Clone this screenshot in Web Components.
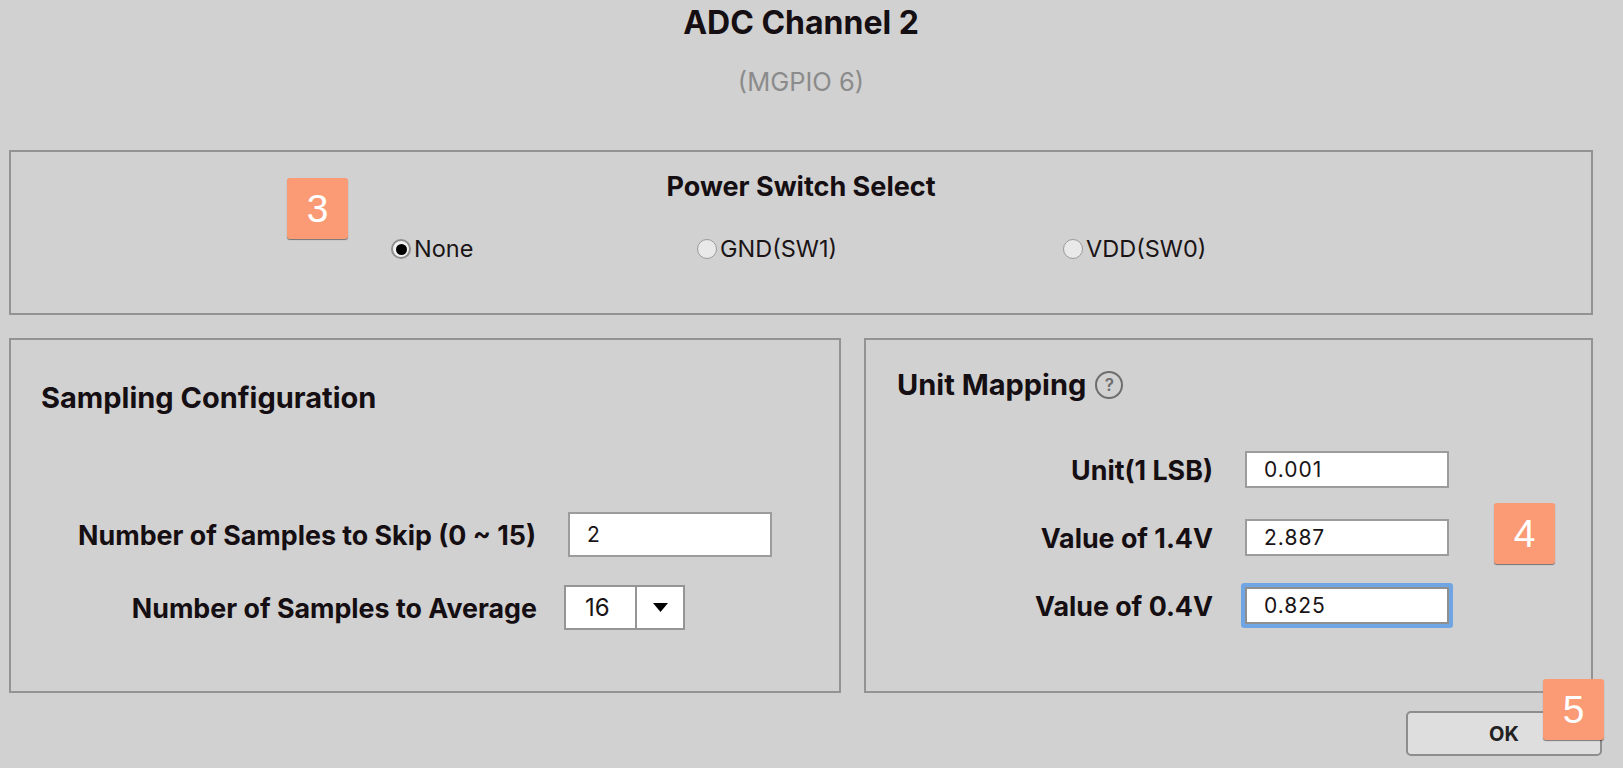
<!DOCTYPE html>
<html>
<head>
<meta charset="utf-8">
<title>ADC Channel 2</title>
<style>
  html, body { margin: 0; background: #d1d1d1; overflow: hidden; }
  body { font-family: Inter, "Liberation Sans", sans-serif; color: #150e12; }
</style>
</head>
<body>
<adc-dialog>
  <dialog-head slot="head" sub="(MGPIO 6)">ADC Channel 2</dialog-head>

  <config-panel slot="top" style="height:165px">
    <panel-title center style="padding-top:19px">Power Switch Select</panel-title>
    <radio-group style="padding:31px 0 0 380px">
      <radio-option checked style="width:306px">None</radio-option>
      <radio-option style="width:366px">GND(SW1)</radio-option>
      <radio-option>VDD(SW0)</radio-option>
    </radio-group>
  </config-panel>

  <config-panel slot="left" style="height:355px">
    <panel-title style="padding:42px 0 0 30px;font-size:29px">Sampling Configuration</panel-title>
    <form-row label-width="525" gap="32" style="margin-top:98px">
      <span slot="label">Number of Samples to Skip (0 ~ 15)</span>
      <text-field style="width:204px;height:45px;line-height:41px">2</text-field>
    </form-row>
    <form-row label-width="526" gap="27" style="margin-top:28px">
      <span slot="label">Number of Samples to Average</span>
      <combo-box>16</combo-box>
    </form-row>
  </config-panel>

  <config-panel slot="right" style="height:355px">
    <panel-title style="display:flex;align-items:center;gap:9px;padding:29px 0 0 31px;font-size:29px"><span>Unit Mapping</span><help-icon></help-icon></panel-title>
    <form-row label-width="347" gap="32" style="margin-top:50px">
      <span slot="label">Unit(1 LSB)</span>
      <text-field style="width:204px">0.001</text-field>
    </form-row>
    <form-row label-width="347" gap="32" style="margin-top:31px">
      <span slot="label">Value of 1.4V</span>
      <text-field style="width:204px">2.887</text-field>
    </form-row>
    <form-row label-width="347" gap="32" style="margin-top:31px">
      <span slot="label">Value of 0.4V</span>
      <text-field focused style="width:204px">0.825</text-field>
    </form-row>
  </config-panel>

  <push-button slot="actions">OK</push-button>

  <note-badge slot="notes" x="287" y="178">3</note-badge>
  <note-badge slot="notes" x="1494" y="503">4</note-badge>
  <note-badge slot="notes" x="1543" y="679">5</note-badge>
</adc-dialog>

<script>
// small helper, every element below is just a template + shadow root
function tpl(html) {
  const t = document.createElement("template");
  t.innerHTML = html;
  return t;
}

class Base extends HTMLElement {
  constructor() {
    super();
    this.root = this.attachShadow({ mode: "open" });
    this.root.appendChild(this.constructor.template.content.cloneNode(true));
  }
}

class AdcDialog extends Base {
  static template = tpl(`
    <style>
      :host { display: block; position: relative; width: 1623px; height: 768px; box-sizing: border-box; padding: 0 30px 0 9px; }
      .columns { display: flex; gap: 23px; margin-top: 23px; }
      .columns ::slotted([slot=left]) { width: 832px; }
      .columns ::slotted([slot=right]) { width: 729px; }
      .actions { display: flex; justify-content: flex-end; margin: 18px -9px 0 0; }
    </style>
    <slot name="head"></slot>
    <div><slot name="top"></slot></div>
    <div class="columns"><slot name="left"></slot><slot name="right"></slot></div>
    <div class="actions"><slot name="actions"></slot></div>
    <slot name="notes"></slot>
  `);
}

class DialogHead extends Base {
  static template = tpl(`
    <style>
      :host { display: block; height: 150px; box-sizing: border-box; padding-top: 5px; text-align: center; }
      h1 { margin: 0; font-size: 32px; line-height: 36px; font-weight: 700; }
      p { margin: 23px 0 0; font-size: 25.5px; line-height: 36px; color: #8b8b8b; }
    </style>
    <h1><slot></slot></h1>
    <p></p>
  `);
  connectedCallback() {
    this.root.querySelector("p").textContent = this.getAttribute("sub");
  }
}

class ConfigPanel extends Base {
  static template = tpl(`
    <style>
      :host { display: block; box-sizing: border-box; border: 2px solid #939393; }
    </style>
    <slot></slot>
  `);
}

class PanelTitle extends Base {
  static template = tpl(`
    <style>
      :host { display: block; font-size: 27px; line-height: 32px; font-weight: 700; }
      :host([center]) { text-align: center; }
    </style>
    <slot></slot>
  `);
}

class RadioGroup extends Base {
  static template = tpl(`
    <style>:host { display: flex; }</style>
    <slot></slot>
  `);
}

class RadioOption extends Base {
  static template = tpl(`
    <style>
      :host { display: flex; align-items: center; gap: 3px; box-sizing: border-box; font-size: 23.5px; line-height: 30px; color: #1a1416; }
      i { width: 20px; height: 20px; box-sizing: border-box; border-radius: 50%; border: 1px solid #9a9a9a; background: #e9e9e9; display: flex; align-items: center; justify-content: center; }
      :host([checked]) i { border: 2px solid #8e8e8e; background: #f2f2f2; }
      :host([checked]) i::after { content: ""; width: 11px; height: 11px; border-radius: 50%; background: #000; }
    </style>
    <i></i><span><slot></slot></span>
  `);
}

class FormRow extends Base {
  static template = tpl(`
    <style>
      :host { display: flex; align-items: center; font-size: 26.8px; font-weight: 700; }
      .label { text-align: right; flex: none; }
    </style>
    <div class="label"><slot name="label"></slot></div>
    <slot></slot>
  `);
  connectedCallback() {
    this.root.querySelector(".label").style.width = this.getAttribute("label-width") + "px";
    this.style.gap = this.getAttribute("gap") + "px";
  }
}

class TextField extends Base {
  static template = tpl(`
    <style>
      :host { display: block; box-sizing: border-box; height: 37px; padding-left: 17px; background: #fff; border: 2px solid #9c9c9c; font-size: 21px; font-weight: 400; line-height: 33px; letter-spacing: 1px; color: #1a1416; }
      :host([focused]) { border-color: #8f8f8f; box-shadow: 0 0 0 4px #6fa5e3; border-radius: 1px; }
    </style>
    <slot></slot>
  `);
}

class ComboBox extends Base {
  static template = tpl(`
    <style>
      :host { display: flex; box-sizing: border-box; width: 121px; height: 45px; background: #fff; border: 2px solid #959595; font-size: 24px; font-weight: 400; line-height: 41px; color: #1a1416; }
      .value { width: 71px; box-sizing: border-box; padding-left: 19px; border-right: 2px solid #959595; }
      .arrow { flex: 1; display: flex; align-items: center; justify-content: center; }
      svg { display: block; }
    </style>
    <div class="value"><slot></slot></div>
    <div class="arrow"><svg width="15" height="9" viewBox="0 0 15 9"><path d="M0 0H15L7.5 9Z" fill="#000"/></svg></div>
  `);
}

class HelpIcon extends Base {
  static template = tpl(`
    <style>
      :host { display: flex; flex: none; align-items: center; justify-content: center; box-sizing: border-box; width: 28px; height: 28px; border-radius: 50%; border: 2px solid #6e6e6e; font-size: 17px; line-height: 1; font-weight: 600; color: #6e6e6e; }
    </style>
    ?
  `);
}

class PushButton extends Base {
  static template = tpl(`
    <style>
      :host { display: flex; align-items: center; justify-content: center; box-sizing: border-box; width: 196px; height: 45px; background: #dedede; border: 2px solid #8d8d8d; border-radius: 5px; font-size: 20px; font-weight: 700; color: #222; }
    </style>
    <slot></slot>
  `);
}

// callouts pasted on top of the screenshot, sit over everything
class NoteBadge extends Base {
  static template = tpl(`
    <style>
      :host { position: absolute; display: flex; align-items: center; justify-content: center; width: 61px; height: 61px; background: #fb9b75; border-radius: 3px; box-shadow: 0 1px 1px rgba(0,0,0,.45); font-family: "Liberation Sans", sans-serif; font-size: 39px; color: #fff; }
    </style>
    <slot></slot>
  `);
  connectedCallback() {
    this.style.left = this.getAttribute("x") + "px";
    this.style.top = this.getAttribute("y") + "px";
  }
}

customElements.define("adc-dialog", AdcDialog);
customElements.define("dialog-head", DialogHead);
customElements.define("config-panel", ConfigPanel);
customElements.define("panel-title", PanelTitle);
customElements.define("radio-group", RadioGroup);
customElements.define("radio-option", RadioOption);
customElements.define("form-row", FormRow);
customElements.define("text-field", TextField);
customElements.define("combo-box", ComboBox);
customElements.define("help-icon", HelpIcon);
customElements.define("push-button", PushButton);
customElements.define("note-badge", NoteBadge);
</script>
</body>
</html>
